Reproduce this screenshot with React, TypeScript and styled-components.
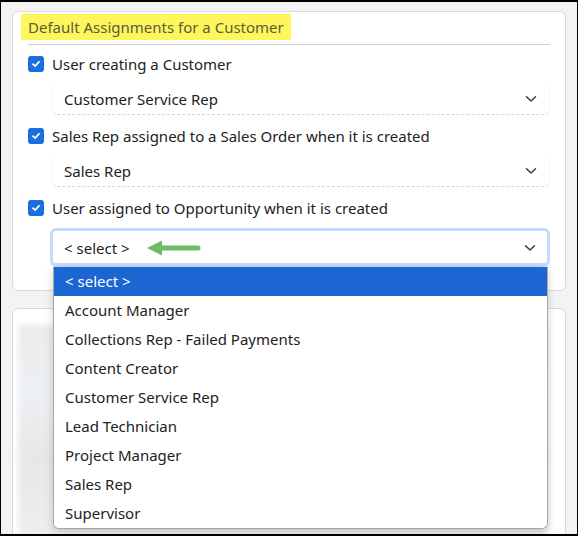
import styled, { createGlobalStyle } from 'styled-components';

const GlobalStyle = createGlobalStyle`
  * { box-sizing: border-box; }
  body {
    margin: 0;
    font-family: 'Noto Sans', 'Open Sans', sans-serif;
    color: #222;
  }
`;

const Frame = styled.div`
  width: 578px;
  height: 536px;
  overflow: hidden;
  background: #f3f3f3;
  border-style: solid;
  border-color: #000;
  border-width: 2px 1px 2px 1px;
  padding: 9px 11px 0 11px;
  display: flex;
  flex-direction: column;
  gap: 17px;
`;

const Card = styled.div<{ $grow?: boolean }>`
  background: #fff;
  border: 1px solid #d9d9d9;
  border-radius: 6px;
  padding: 2px 15px 0 15px;
  height: ${(p) => (p.$grow ? 'auto' : '280px')};
  flex: ${(p) => (p.$grow ? '1' : 'none')};
`;

const Title = styled.div`
  display: inline-block;
  margin-left: -7px;
  padding: 3px 7px;
  background: #fdf65d;
  color: #5c5c38;
  font-size: 15px;
  line-height: 20px;
`;

const Divider = styled.div`
  height: 1px;
  background: #cfcfcf;
  margin: 4px 0 -2px 0;
`;

const Field = styled.div`
  padding-top: 9px;
`;

const CheckRow = styled.label`
  display: flex;
  align-items: center;
  gap: 8px;
  height: 24px;
  font-size: 15px;
`;

const Box = styled.span`
  width: 16px;
  height: 16px;
  border-radius: 3px;
  background: #1a6fe3;
  display: flex;
  align-items: center;
  justify-content: center;
`;

const SelectWrap = styled.div<{ $focused?: boolean }>`
  position: relative;
  margin: ${(p) => (p.$focused ? '8px 0 0 22px' : '7px 0 0 24px')};
`;

const Select = styled.div<{ $focused?: boolean }>`
  display: flex;
  align-items: center;
  justify-content: space-between;
  height: ${(p) => (p.$focused ? '39px' : '32px')};
  padding: ${(p) => (p.$focused ? '0 11px 0 11px' : '0 12px 0 11px')};
  font-size: 15px;
  color: #222;
  border-radius: 6px;
  border: ${(p) => (p.$focused ? '3px solid #c4dbfb' : '1px solid #f7f7f7')};
  border-top-color: ${(p) => (p.$focused ? '#c4dbfb' : 'transparent')};
  border-bottom: ${(p) =>
    p.$focused ? '3px solid #c4dbfb' : '1px dashed #d6d6d6'};
  box-shadow: ${(p) => (p.$focused ? 'inset 0 -1px 0 #d0d8e6' : 'none')};
`;

const Value = styled.span`
  display: flex;
  align-items: center;
  gap: 17px;
`;

const List = styled.ul`
  position: absolute;
  top: 100%;
  left: 3px;
  right: 2px;
  margin: 0;
  padding: 0;
  list-style: none;
  background: #fff;
  border: 1px solid #a8a8a8;
  border-top: none;
  border-radius: 0 0 6px 6px;
  box-shadow: 0 3px 8px rgba(0, 0, 0, 0.18);
  overflow: hidden;
  z-index: 2;
`;

const Item = styled.li<{ $active?: boolean }>`
  height: 29px;
  line-height: 29px;
  padding-left: 11px;
  font-size: 15px;
  color: ${(p) => (p.$active ? '#fff' : '#222')};
  background: ${(p) => (p.$active ? '#1b66d2' : '#fff')};
`;

const Blurred = styled.div`
  margin: 14px 0 0 -10px;
  height: 220px;
  width: 530px;
  background: linear-gradient(
    180deg,
    #ebebeb 0%,
    #edf0f4 30%,
    #e7e7e7 60%,
    #efefef 100%
  );
  filter: blur(3px);
`;

function Check() {
  return (
    <Box>
      <svg width="10" height="10" viewBox="0 0 10 10">
        <path
          d="M2 5.2 L4.1 7.2 L8 2.9"
          fill="none"
          stroke="#fff"
          strokeWidth="1.8"
          strokeLinecap="round"
          strokeLinejoin="round"
        />
      </svg>
    </Box>
  );
}

function Chevron() {
  return (
    <svg width="12" height="8" viewBox="0 0 12 8">
      <path
        d="M1.5 1.8 L6 6 L10.5 1.8"
        fill="none"
        stroke="#3a3a3a"
        strokeWidth="1.5"
        strokeLinecap="round"
        strokeLinejoin="round"
      />
    </svg>
  );
}

function Arrow() {
  return (
    <svg width="54" height="16" viewBox="0 0 54 16">
      <path d="M0 8 L15 0.5 L15 15.5 Z" fill="#6bbd68" />
      <path
        d="M12 8 L51 8"
        stroke="#6bbd68"
        strokeWidth="5"
        strokeLinecap="round"
      />
    </svg>
  );
}

const options = [
  '< select >',
  'Account Manager',
  'Collections Rep - Failed Payments',
  'Content Creator',
  'Customer Service Rep',
  'Lead Technician',
  'Project Manager',
  'Sales Rep',
  'Supervisor',
];

const fields = [
  { label: 'User creating a Customer', value: 'Customer Service Rep' },
  {
    label: 'Sales Rep assigned to a Sales Order when it is created',
    value: 'Sales Rep',
  },
  {
    label: 'User assigned to Opportunity when it is created',
    value: '< select >',
    open: true,
  },
];

export default function App() {
  return (
    <>
      <GlobalStyle />
      <Frame>
        <Card>
          <Title>Default Assignments for a Customer</Title>
          <Divider />
          {fields.map((f) => (
            <Field key={f.label}>
              <CheckRow>
                <Check />
                {f.label}
              </CheckRow>
              <SelectWrap $focused={f.open}>
                <Select $focused={f.open}>
                  <Value>
                    {f.value}
                    {f.open && <Arrow />}
                  </Value>
                  <Chevron />
                </Select>
                {f.open && (
                  <List>
                    {options.map((o, i) => (
                      <Item key={o} $active={i === 0}>
                        {o}
                      </Item>
                    ))}
                  </List>
                )}
              </SelectWrap>
            </Field>
          ))}
        </Card>
        <Card $grow>
          <Blurred />
        </Card>
      </Frame>
    </>
  );
}
